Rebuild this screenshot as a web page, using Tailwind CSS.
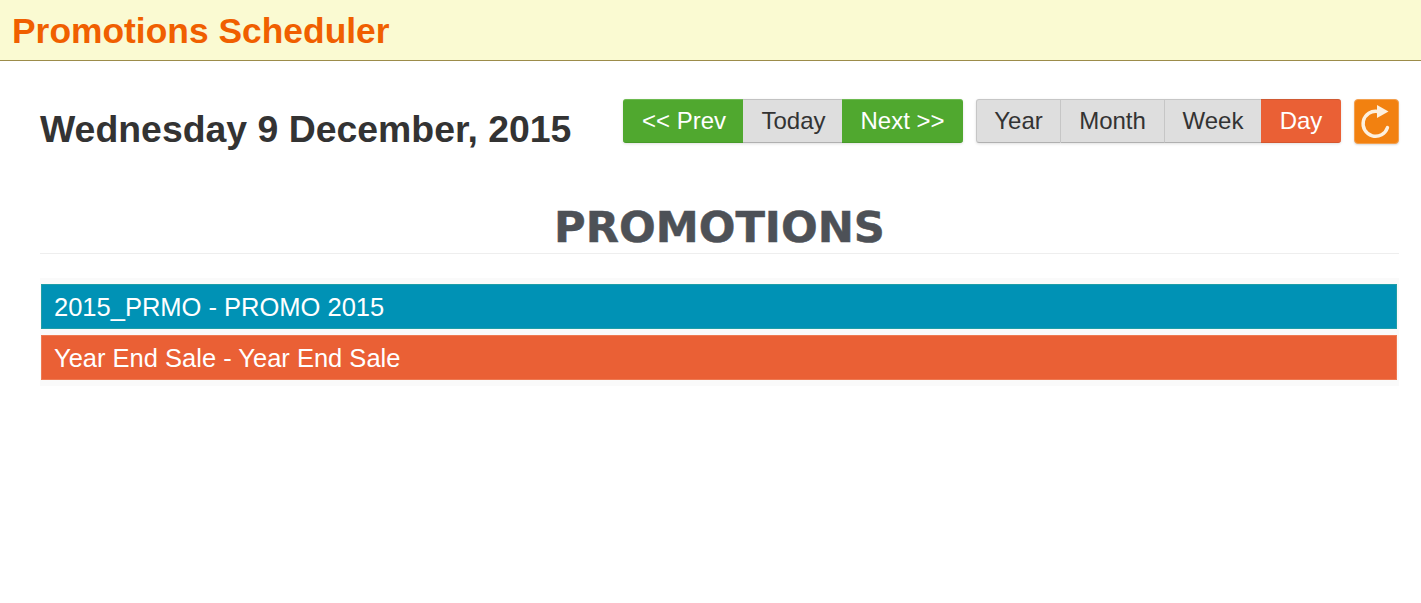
<!DOCTYPE html>
<html lang="en">
<head>
    <meta charset="UTF-8" />
    <title>Promotions Scheduler</title>
    <script src="https://cdn.jsdelivr.net/npm/@tailwindcss/browser@4"></script>
</head>
<body class="bg-white font-['Liberation_Sans',Arial,sans-serif] text-[#333]">
    <!-- Header -->
    <header class="h-[61px] bg-[#fafad2] border-b border-[#9c8c4a] pl-3 pt-[3px] flex items-center">
        <h1 class="text-[35.4px] leading-none font-bold text-[#f05f00]">Promotions Scheduler</h1>
    </header>

    <main class="pl-10 pr-[22px]">
        <!-- Toolbar -->
        <div class="flex items-start justify-between pt-[38px]">
            <h2 class="text-[37.4px] leading-[60px] font-bold text-[#333]">Wednesday 9 December, 2015</h2>
            <div class="flex items-start">
                <div class="flex h-[44px] text-[24px] rounded-[3px] shadow-[0_1px_3px_rgba(0,0,0,0.12)]">
                    <button class="w-[120px] bg-[#50a82f] text-white rounded-l-[3px] border-t border-t-[#6dba50] border-b border-b-[#479a29] pl-[2px]">&lt;&lt; Prev</button>
                    <button class="w-[99px] bg-[#dedede] text-[#333] border-y border-y-[#c2c2c2] border-b-[#b0b0b0] pl-[2px]">Today</button>
                    <button class="w-[121px] bg-[#50a82f] text-white rounded-r-[3px] border-t border-t-[#6dba50] border-b border-b-[#479a29]">Next &gt;&gt;</button>
                </div>
                <div class="flex h-[44px] ml-[13px] text-[24px] rounded-[3px] shadow-[0_1px_3px_rgba(0,0,0,0.12)]">
                    <button class="w-[85px] bg-[#dedede] text-[#333] rounded-l-[3px] border border-[#c6c6c6] border-b-[#b0b0b0]">Year</button>
                    <button class="w-[104px] bg-[#dedede] text-[#333] border-y border-r border-[#c6c6c6] border-b-[#b0b0b0]">Month</button>
                    <button class="w-[96px] bg-[#dedede] text-[#333] border-y border-[#c6c6c6] border-b-[#b0b0b0]">Week</button>
                    <button class="w-[80px] bg-[#ea6035] text-white rounded-r-[3px] border-t border-t-[#d05a33] border-b border-b-[#d5562e]">Day</button>
                </div>
                <button class="ml-[13px] w-[45px] h-[45px] bg-[#f28110] rounded-[4px] border border-[#f3a04e] shadow-[0_1px_2px_rgba(0,0,0,0.15)] flex items-center justify-center">
                    <svg width="43" height="43" viewBox="0 0 43 43" fill="none">
                        <path d="M23 11.5A12.5 12.5 0 1 0 32.5 27.5" stroke="#fdf0de" stroke-width="3.4" stroke-linecap="round"/>
                        <path d="M22 5 33.5 11.5 22 18Z" fill="#fdf0de"/>
                    </svg>
                </button>
            </div>
        </div>

        <!-- Promotions -->
        <div class="mt-[24px] h-[71px] border-b border-[#eeeeee] text-center font-['DejaVu_Sans',Verdana,sans-serif] text-[43.2px] leading-[88px] font-bold text-[#4d5157] [-webkit-text-stroke:0.5px_#4d5157]">PROMOTIONS</div>
        <div class="mt-[24px] bg-[#fafafa] pl-px pr-[2px] py-[6px] flex flex-col gap-[6px]">
            <div class="h-[45px] bg-[#0092b5] border border-[#1f9ea8] pl-3 pt-[2px] flex items-center text-[25.5px] text-white">2015_PRMO - PROMO 2015</div>
            <div class="h-[45px] bg-[#ea6035] border border-[#ee7a52] pl-3 pt-[2px] flex items-center text-[25.5px] text-white">Year End Sale - Year End Sale</div>
        </div>
    </main>
</body>
</html>
